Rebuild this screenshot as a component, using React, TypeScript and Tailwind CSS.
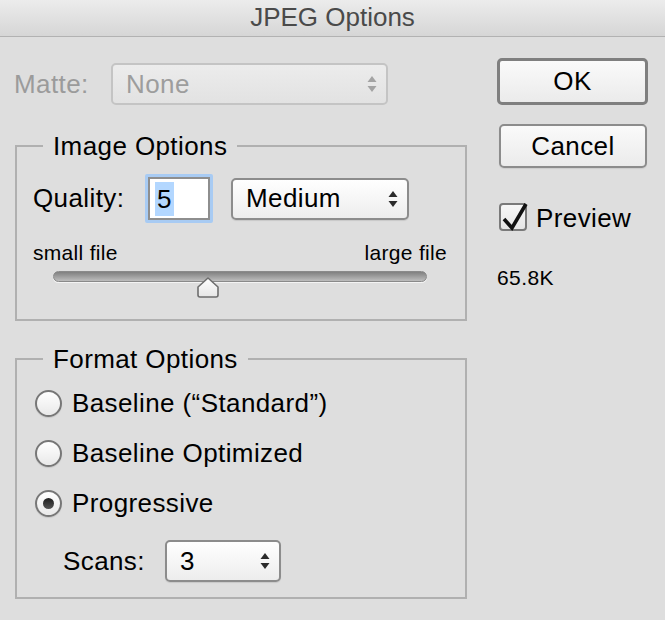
import clsx from "clsx";

function Arrows({ disabled }: { disabled?: boolean }) {
  return (
    <svg width="10" height="18" viewBox="0 0 10 18" className="shrink-0">
      <path d="M5 1 L9.5 7 L0.5 7 Z" fill={disabled ? "#a3a3a3" : "#2b2b2b"} />
      <path d="M0.5 11 L9.5 11 L5 17 Z" fill={disabled ? "#a3a3a3" : "#2b2b2b"} />
    </svg>
  );
}

function Select({ value, className, disabled }: { value: string; className?: string; disabled?: boolean }) {
  return (
    <div
      className={clsx(
        "flex items-center justify-between rounded-[5px] border-2 pl-[13px] pr-[9px]",
        disabled
          ? "border-[#c4c4c4] bg-gradient-to-b from-[#ececec] to-[#e2e2e2] text-[#9d9d9d]"
          : "border-[#8c8c8c] bg-gradient-to-b from-white to-[#ededed] text-black shadow-[0_1px_1px_rgba(0,0,0,0.1)]",
        className
      )}
    >
      <span>{value}</span>
      <Arrows disabled={disabled} />
    </div>
  );
}

function Radio({ label, checked }: { label: string; checked?: boolean }) {
  return (
    <div className="flex h-[50px] items-center gap-[10px]">
      <div className="flex h-[27px] w-[27px] items-center justify-center rounded-full border-2 border-[#777777] bg-gradient-to-b from-white to-[#e9e9e9] shadow-[0_1px_1px_rgba(0,0,0,0.1)]">
        {checked && <div className="h-[11px] w-[11px] rounded-full bg-gradient-to-b from-[#1f1f1f] to-[#555555]" />}
      </div>
      <span>{label}</span>
    </div>
  );
}

export default function App() {
  return (
    <div className="h-[620px] w-[665px] overflow-hidden bg-[#dedede] font-['Liberation_Sans',Arial,sans-serif] text-[26px] text-black">
      {/* title bar */}
      <div className="h-[37px] border-b border-[#b2b2b2] bg-gradient-to-b from-[#ececec] to-[#d6d6d6] text-center leading-[35px] text-[#4a4a4a]">
        JPEG Options
      </div>

      <div className="flex tracking-[0.4px]">
        {/* left column */}
        <div className="pl-[14px] pt-[26px]">
          <div className="flex h-[42px] items-center">
            <span className="w-[97px] text-[#9b9b9b]">Matte:</span>
            <Select value="None" disabled className="h-[42px] w-[277px]" />
          </div>

          <fieldset className="ml-[1px] mt-[26px] w-[452px] border-2 border-[#b0b0b0] pb-[19px] pl-[16px] pr-[18px]">
            <legend className="ml-[10px] px-[10px] leading-[30px]">Image Options</legend>
            <div className="mt-[13px] flex h-[49px] items-center">
              <span className="w-[112px]">Quality:</span>
              <div className="h-[49px] w-[68px] rounded-[2px] border-[3px] border-[#a8cbf3]">
                <div className="flex h-full items-center border-2 border-[#8e8e8e] bg-white pl-[5px]">
                  <span className="bg-[#b3d7ff] px-[2px] leading-[34px]">5</span>
                </div>
              </div>
              <Select value="Medium" className="ml-[18px] h-[42px] w-[178px]" />
            </div>
            <div className="mt-[18px] flex justify-between text-[21px] leading-[24px] tracking-[0.3px]">
              <span>small file</span>
              <span>large file</span>
            </div>
            <div className="relative ml-[20px] mt-[6px] h-[29px] w-[374px]">
              <div className="h-[11px] rounded-full border border-[#8a8a8a] bg-gradient-to-b from-[#808080] to-[#bdbdbd] shadow-[0_1px_0_#f4f4f4]" />
              <svg width="26" height="24" viewBox="0 0 26 24" className="absolute left-[142px] top-[5px]">
                <defs>
                  <linearGradient id="th" x1="0" y1="0" x2="0" y2="1">
                    <stop offset="0" stopColor="#ffffff" />
                    <stop offset="1" stopColor="#e6e6e6" />
                  </linearGradient>
                </defs>
                <path
                  d="M13 2 L23 11 L23 19 Q23 21 21 21 L5 21 Q3 21 3 19 L3 11 Z"
                  fill="url(#th)"
                  stroke="#6e6e6e"
                  strokeWidth="1.6"
                  strokeLinejoin="round"
                />
              </svg>
            </div>
          </fieldset>

          <fieldset className="ml-[1px] mt-[23px] w-[452px] border-2 border-[#b0b0b0] pb-[15px] pl-[18px] pr-[18px]">
            <legend className="ml-[8px] px-[10px] leading-[30px]">Format Options</legend>
            <div className="pt-[4px]">
              <Radio label="Baseline (“Standard”)" />
              <Radio label="Baseline Optimized" />
              <Radio label="Progressive" checked />
            </div>
            <div className="ml-[28px] mt-[12px] flex h-[42px] items-center">
              <span className="w-[102px]">Scans:</span>
              <Select value="3" className="h-[42px] w-[116px]" />
            </div>
          </fieldset>
        </div>

        {/* right column */}
        <div className="ml-[30px] flex flex-col items-start pt-[21px]">
          <button className="flex h-[47px] w-[151px] items-center justify-center rounded-[5px] border-[3px] border-[#7f7f7f] bg-gradient-to-b from-[#fafafa] to-[#ebebeb]">
            OK
          </button>
          <button className="ml-[2px] mt-[19px] flex h-[44px] w-[148px] items-center justify-center rounded-[5px] border-2 border-[#8c8c8c] bg-gradient-to-b from-[#fafafa] to-[#ebebeb] shadow-[0_1px_1px_rgba(0,0,0,0.08)]">
            Cancel
          </button>
          <div className="ml-[2px] mt-[34px] flex h-[30px] items-center gap-[9px]">
            <div className="relative h-[28px] w-[28px] rounded-[4px] border-2 border-[#7a7a7a] bg-gradient-to-b from-[#f7f7f7] to-[#e6e6e6]">
              <svg width="30" height="30" viewBox="0 0 30 30" className="absolute -left-[2px] -top-[2px] overflow-visible">
                <path d="M5 16 L13 25 L27 1" fill="none" stroke="#111111" strokeWidth="3.6" strokeLinejoin="miter" />
              </svg>
            </div>
            <span className="pt-[3px]">Preview</span>
          </div>
          <div className="mt-[34px] text-[21px] leading-[24px]">65.8K</div>
        </div>
      </div>
    </div>
  );
}
